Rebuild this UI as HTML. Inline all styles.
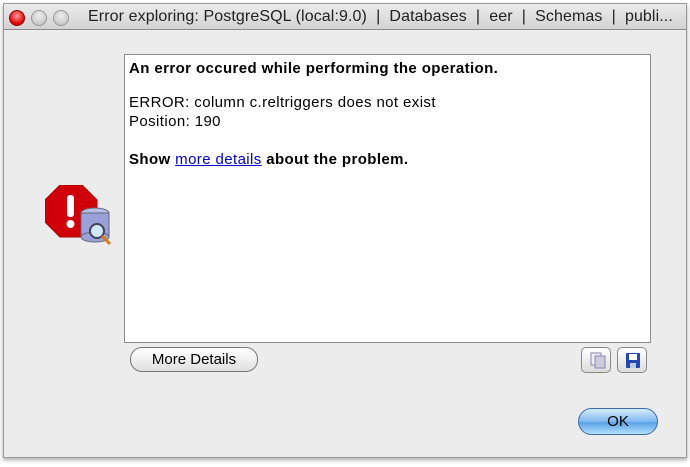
<!DOCTYPE html>
<html><head><style>
body{margin:0;width:690px;height:467px;background:#fff;font-family:"Liberation Sans",sans-serif;position:relative;overflow:hidden}
.win{position:absolute;left:3px;top:3px;width:682px;height:453px;background:#ececec;border:1px solid #9a9a9a;box-shadow:0 2px 4px rgba(0,0,0,.35)}
.title{position:absolute;left:0;top:0;right:0;height:25px;background:linear-gradient(#ebebeb,#d3d3d3);border-bottom:1px solid #8a8a8a;font-size:16px;color:#222;line-height:26px;padding-left:84px;white-space:nowrap;letter-spacing:.1px}
.dot{position:absolute;top:6px;width:14px;height:14px;border-radius:50%;background:radial-gradient(circle at 50% 35%,#eee,#bbb);border:1px solid #999}
.panel{position:absolute;left:120px;top:50px;width:525px;height:287px;background:#fff;border:1px solid #8d8d8d;font-size:15px;color:#000;letter-spacing:.4px}
.panel div{position:absolute;left:4px;white-space:nowrap}
.btn{position:absolute;border:1px solid #777;border-radius:12px;background:linear-gradient(#fff,#e0e0e0);font-size:15px;text-align:center;box-sizing:border-box}
.ib{position:absolute;width:30px;height:26px;border:1px solid #888;border-radius:5px;background:linear-gradient(#fff,#ddd);box-sizing:border-box}
</style></head><body>
<div class="win">
<div class="title"><span class="dot" style="left:5px;background:radial-gradient(circle at 50% 35%,#ff9a9a,#d00 70%);border-color:#900"></span><span class="dot" style="left:27px"></span><span class="dot" style="left:49px"></span>Error exploring: PostgreSQL (local:9.0) &nbsp;|&nbsp; Databases &nbsp;|&nbsp; eer &nbsp;|&nbsp; Schemas &nbsp;|&nbsp; publi...</div>
<svg style="position:absolute;left:41px;top:181px" width="70" height="70">
<polygon points="15,0 37,0 52,15 52,37 37,52 15,52 0,37 0,15" fill="#d0000a" stroke="#a00" />
<rect x="22" y="10" width="7" height="22" rx="3" fill="#fff"/><circle cx="25.5" cy="39" r="4" fill="#fff"/>
<ellipse cx="50" cy="28" rx="14" ry="5" fill="#b8bde8" stroke="#667"/>
<rect x="36" y="28" width="28" height="24" fill="#9aa0d8" stroke="#667"/>
<ellipse cx="50" cy="52" rx="14" ry="5" fill="#9aa0d8" stroke="#667"/>
<circle cx="52" cy="46" r="7" fill="#cfe8ff" stroke="#445" stroke-width="2"/>
<line x1="57" y1="51" x2="65" y2="59" stroke="#d87a10" stroke-width="3"/>
</svg>
<div class="panel">
<div style="top:5px;font-weight:bold">An error occured while performing the operation.</div>
<div style="top:39px">ERROR: column c.reltriggers does not exist</div>
<div style="top:58px">Position: 190</div>
<div style="top:96px;font-weight:bold">Show <span style="color:#00c;font-weight:normal;text-decoration:underline">more details</span> about the problem.</div>
</div>
<div class="btn" style="left:126px;top:343px;width:128px;height:25px;line-height:23px">More Details</div>
<div class="ib" style="left:577px;top:343px"></div>
<div class="ib" style="left:613px;top:343px"></div>
<svg style="position:absolute;left:584px;top:347px" width="60" height="20">
<rect x="3" y="2" width="10" height="12" fill="#eef" stroke="#88a"/><rect x="7" y="5" width="10" height="12" fill="#ccd" stroke="#88a"/>
<rect x="38" y="2" width="14" height="15" rx="1" fill="#2448b0"/><rect x="41" y="3" width="8" height="6" fill="#fff"/><rect x="42" y="12" width="6" height="5" fill="#bcd"/>
</svg>
<div class="btn" style="left:574px;top:404px;width:80px;height:27px;line-height:25px;border-radius:14px;border-color:#3a6ea8;background:linear-gradient(#d6ecff,#7fb8ee 50%,#5aa2e6 55%,#b4e0ff)">OK</div>
</div>
</body></html>
